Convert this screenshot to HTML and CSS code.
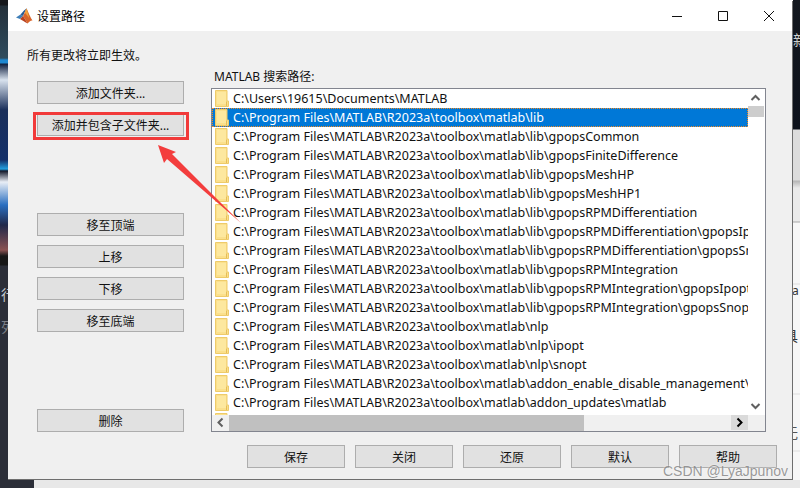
FILE: index.html
```html
<!DOCTYPE html>
<html lang="zh-CN">
<head>
    <meta charset="UTF-8">
    <title>设置路径</title>
    <link rel="stylesheet" href="styles.css">
</head>
<body>

<svg class="defs" width="0" height="0">
    <symbol id="folder" viewBox="0 0 14 17">
        <path d="M.5.5h11.5v10.5h1.5v5.500H.5z" fill="#fbe08c" stroke="#eecb6a"/>
        <path d="M2 2h9v12H2z" fill="#fde89f"/>
        <path d="M11.500 11.500v4.500" stroke="#e5bd58"/>
    </symbol>
</svg>

<div class="desktop">
    <div class="strip-left">
        <span class="frag-left first">行</span>
        <span class="frag-left second">列</span>
    </div>

    <div class="window">
        <div class="titlebar">
            <svg class="logo" width="17" height="16" viewBox="0 0 17 16">
                <path d="M0 9.500 4.500 6.500 7 8 4 11z" fill="#3f7fb8"/>
                <path d="M4.500 6.500 7 8 10 1.500 11 0 8 2.500z" fill="#2a5c94"/>
                <path d="M10.500.5C12 3 14 9 16.500 12.500 15 12 13 13.500 11.500 15.500 10 12.500 8.500 10 7 8 8.500 6 9.500 2 10.500.5z" fill="#d9642a"/>
                <path d="M7 8C8.500 10 10 12.500 11.500 15.500 8.500 14 6 12 4 11z" fill="#b8411f"/>
                <path d="M10.500.5C11.500 3 12.500 6 13 10 11 7 9.500 5 8.500 5z" fill="#f2a23c"/>
            </svg>
            <span class="title">设置路径</span>
            <div class="win-controls">
                <svg width="10" height="10" viewBox="0 0 10 10"><path d="M0 5.500h10" stroke="#111"/></svg>
                <svg width="10" height="10" viewBox="0 0 10 10"><path d="M.5.5h9v9h-9z" fill="none" stroke="#111"/></svg>
                <svg width="10" height="10" viewBox="0 0 10 10"><path d="M0 0l10 10M10 0L0 10" stroke="#111"/></svg>
            </div>
        </div>

        <div class="content">
            <p class="notice">所有更改将立即生效。</p>

            <div class="main">
                <div class="side">
                    <div class="group">
                        <button class="btn">添加文件夹...</button>
                        <button class="btn">添加并包含子文件夹...</button>
                    </div>
                    <div class="group">
                        <button class="btn">移至顶端</button>
                        <button class="btn">上移</button>
                        <button class="btn">下移</button>
                        <button class="btn">移至底端</button>
                    </div>
                    <div class="group">
                        <button class="btn">删除</button>
                    </div>
                </div>

                <div class="paths">
                    <label class="paths-label">MATLAB 搜索路径:</label>
                    <div class="listview">
                        <div class="list-body">
                            <ul class="rows">
                                <li><svg class="ico"><use href="#folder"/></svg>C:\Users\19615\Documents\MATLAB</li>
                                <li class="selected"><svg class="ico"><use href="#folder"/></svg>C:\Program Files\MATLAB\R2023a\toolbox\matlab\lib</li>
                                <li><svg class="ico"><use href="#folder"/></svg>C:\Program Files\MATLAB\R2023a\toolbox\matlab\lib\gpopsCommon</li>
                                <li><svg class="ico"><use href="#folder"/></svg>C:\Program Files\MATLAB\R2023a\toolbox\matlab\lib\gpopsFiniteDifference</li>
                                <li><svg class="ico"><use href="#folder"/></svg>C:\Program Files\MATLAB\R2023a\toolbox\matlab\lib\gpopsMeshHP</li>
                                <li><svg class="ico"><use href="#folder"/></svg>C:\Program Files\MATLAB\R2023a\toolbox\matlab\lib\gpopsMeshHP1</li>
                                <li><svg class="ico"><use href="#folder"/></svg>C:\Program Files\MATLAB\R2023a\toolbox\matlab\lib\gpopsRPMDifferentiation</li>
                                <li><svg class="ico"><use href="#folder"/></svg>C:\Program Files\MATLAB\R2023a\toolbox\matlab\lib\gpopsRPMDifferentiation\gpopsIpopt</li>
                                <li><svg class="ico"><use href="#folder"/></svg>C:\Program Files\MATLAB\R2023a\toolbox\matlab\lib\gpopsRPMDifferentiation\gpopsSnopt</li>
                                <li><svg class="ico"><use href="#folder"/></svg>C:\Program Files\MATLAB\R2023a\toolbox\matlab\lib\gpopsRPMIntegration</li>
                                <li><svg class="ico"><use href="#folder"/></svg>C:\Program Files\MATLAB\R2023a\toolbox\matlab\lib\gpopsRPMIntegration\gpopsIpopt</li>
                                <li><svg class="ico"><use href="#folder"/></svg>C:\Program Files\MATLAB\R2023a\toolbox\matlab\lib\gpopsRPMIntegration\gpopsSnopt</li>
                                <li><svg class="ico"><use href="#folder"/></svg>C:\Program Files\MATLAB\R2023a\toolbox\matlab\nlp</li>
                                <li><svg class="ico"><use href="#folder"/></svg>C:\Program Files\MATLAB\R2023a\toolbox\matlab\nlp\ipopt</li>
                                <li><svg class="ico"><use href="#folder"/></svg>C:\Program Files\MATLAB\R2023a\toolbox\matlab\nlp\snopt</li>
                                <li><svg class="ico"><use href="#folder"/></svg>C:\Program Files\MATLAB\R2023a\toolbox\matlab\addon_enable_disable_management\matlab</li>
                                <li><svg class="ico"><use href="#folder"/></svg>C:\Program Files\MATLAB\R2023a\toolbox\matlab\addon_updates\matlab</li>
                                <li><svg class="ico"><use href="#folder"/></svg></li>
                            </ul>
                            <div class="vscroll">
                                <svg width="15" height="17" viewBox="0 0 15 17"><path d="M3.500 11 7.500 7l4 4" fill="none" stroke="#606060" stroke-width="2"/></svg>
                                <div class="vthumb"></div>
                                <svg class="down" width="15" height="17" viewBox="0 0 15 17"><path d="M3.500 6l4 4 4-4" fill="none" stroke="#606060" stroke-width="2"/></svg>
                            </div>
                        </div>
                        <div class="hscroll">
                            <svg width="17" height="15" viewBox="0 0 17 15"><path d="M10.500 3.500l-4 4 4 4" fill="none" stroke="#606060" stroke-width="2"/></svg>
                            <div class="hthumb"></div>
                            <div class="harrow">
                                <svg width="17" height="15" viewBox="0 0 17 15"><path d="M6.500 3.500l4 4-4 4" fill="none" stroke="#000" stroke-width="2"/></svg>
                            </div>
                        </div>
                    </div>
                </div>
            </div>

            <div class="footer">
                <button class="btn wide">保存</button>
                <button class="btn wide">关闭</button>
                <button class="btn wide">还原</button>
                <button class="btn wide">默认</button>
                <button class="btn wide">帮助</button>
            </div>
        </div>
    </div>

    <div class="strip-right">
        <span class="frag-right one">新</span>
        <span class="frag-right two">a</span>
        <span class="frag-right three">具</span>
        <span class="frag-right four">无</span>
    </div>

    <div class="strip-bottom"></div>

    <!-- annotation -->
    <div class="red-box"></div>
    <svg class="red-arrow" width="800" height="488" viewBox="0 0 800 488">
        <path d="M158 145 176 152 172 154 241 223 167 159 164 163z" fill="#f33d3d"/>
    </svg>
    <span class="watermark">CSDN @LyaJpunov</span>
</div>

</body>
</html>
```

FILE: styles.css
```css
* {
    box-sizing: border-box;
}

html, body {
    margin: 0;
    padding: 0;
    overflow: hidden;
}

ul, li {
    margin: 0;
    padding: 0;
    list-style: none;
}

.defs {
    position: absolute;
}

.desktop {
    width: 800px;
    height: 488px;
    position: relative;
    display: grid;
    grid-template-columns: 8px 785px 7px;
    grid-template-rows: 480px 8px;
    font-family: "Noto Sans", "Noto Sans CJK SC", sans-serif;
    font-size: 12px;
    color: #111;
    overflow: hidden;
}

/* what shows behind the dialog */
.strip-left {
    overflow: hidden;
    display: flex;
    flex-direction: column;
    align-items: flex-end;
    color: #c9cbd0;
    font-size: 14px;
    background: linear-gradient(to bottom,
        #16181c 0, #16181c 5px, #24303a 6px, #2f4c5e 58px,
        #1f88d0 60px, #1f88d0 63px, #10203f 64px, #d8e2ee 80px, #1a2f5a 110px,
        #14306a 160px, #22a0e0 169px, #12182a 171px, #e9eef6 182px, #2a6fc0 205px,
        #20284a 225px, #8a5252 250px, #171717 256px, #171717 265px, #2b2e38 266px);
}

.frag-left {
    margin-right: -7px;
    line-height: 16px;
}

.frag-left.first {
    margin-top: 287px;
}

.frag-left.second {
    margin-top: 16px;
    color: #7d8088;
}

.strip-right {
    overflow: hidden;
    display: flex;
    flex-direction: column;
    align-items: flex-start;
    font-size: 14px;
    color: #333;
    background: linear-gradient(to bottom,
        #14181f 0, #0d121c 129px, #dcdcdc 130px, #dcdcdc 180px, #b5b5b5 181px, #eaeaea 188px,
        #eaeaea 221px, #a8a8a8 222px, #f7f7f7 223px, #f7f7f7 283px, #dddddd 284px, #f7f7f7 285px,
        #f7f7f7 393px, #dddddd 394px, #f7f7f7 395px, #f7f7f7 450px, #dddddd 451px, #f7f7f7 452px);
}

.frag-right {
    line-height: 16px;
}

.frag-right.one {
    margin-top: 32px;
    color: #d0d0d0;
}

.frag-right.two {
    margin-top: 235px;
    margin-left: -1px;
    font-size: 12px;
}

.frag-right.three {
    margin-top: 29px;
    margin-left: -9px;
}

.frag-right.four {
    margin-top: 81px;
    margin-left: -9px;
    color: #555;
}

.strip-bottom {
    grid-column: 1 / 4;
    background: linear-gradient(to right, #2b2e38 34px, #e8e8e8 34px);
}

/* dialog */
.window {
    margin-top: 1px;
    background: #f0f0f0;
    border-right: 1px solid #6e6e6e;
    border-bottom: 1px solid #6e6e6e;
    display: flex;
    flex-direction: column;
}

.titlebar {
    flex: none;
    height: 30px;
    background: #fff;
    display: flex;
    align-items: center;
    padding-left: 8px;
}

.logo {
    margin-right: 4px;
}

.title {
    color: #000;
}

.win-controls {
    margin-left: auto;
    display: flex;
    gap: 36px;
    padding-right: 18px;
}

.content {
    flex: 1;
    min-height: 0;
    padding: 17px 15px 0 29px;
    display: flex;
    flex-direction: column;
}

.notice {
    margin: 0 0 5px -10px;
    line-height: 16px;
}

.main {
    display: flex;
}

.side {
    width: 147px;
    margin-right: 27px;
    padding-top: 12px;
}

.group {
    display: flex;
    flex-direction: column;
    gap: 9px;
}

.group + .group {
    margin-top: 77px;
}

.btn {
    height: 23px;
    padding: 0;
    border: 1px solid #adadad;
    background: #e1e1e1;
    color: #111;
    font-family: inherit;
    font-size: 12px;
}

.btn.wide {
    width: 98px;
}

.paths {
    width: 555px;
}

.paths-label {
    display: block;
    height: 19px;
    line-height: 16px;
    padding-left: 3px;
}

.listview {
    height: 344px;
    border: 1px solid #82858f;
    background: #fff;
    display: flex;
    flex-direction: column;
}

.list-body {
    flex: 1;
    min-height: 0;
    display: flex;
}

.rows {
    flex: 1;
    min-width: 0;
    overflow: hidden;
    font-size: 12.5px;
}

.rows li {
    height: 19px;
    line-height: 19px;
    padding-left: 3px;
    white-space: nowrap;
    overflow: hidden;
    display: flex;
    align-items: center;
}

.rows li.selected {
    background: #0078d7;
    color: #fff;
    outline: 1px dotted #f08a24;
    outline-offset: -1px;
}

.ico {
    flex: none;
    width: 14px;
    height: 17px;
    margin-right: 4px;
}

.vscroll {
    width: 16px;
    margin-right: 1px;
    background: #fff;
    display: flex;
    flex-direction: column;
}

.vthumb {
    height: 11px;
    background: #cdcdcd;
}

.vscroll .down {
    margin-top: auto;
}

.hscroll {
    flex: none;
    height: 16px;
    background: #f0f0f0;
    display: flex;
    padding-right: 17px;
}

.hthumb {
    width: 355px;
    background: #c0c0c0;
}

.harrow {
    margin-left: auto;
    background: #dadada;
    height: 15px;
}

.footer {
    margin-top: 13px;
    display: flex;
    justify-content: flex-end;
    gap: 10px;
}

/* annotation on top of the screenshot */
.red-box {
    position: absolute;
    left: 33px;
    top: 112px;
    width: 156px;
    height: 28px;
    border: 3px solid #f13a3a;
}

.red-arrow {
    position: absolute;
    left: 0;
    top: 0;
}

.watermark {
    position: absolute;
    left: 663px;
    top: 462px;
    font-family: "Liberation Sans", sans-serif;
    font-size: 14px;
    line-height: 18px;
    color: rgba(120, 120, 120, .75);
    text-shadow: 0 0 2px rgba(255, 255, 255, .8);
}
```
